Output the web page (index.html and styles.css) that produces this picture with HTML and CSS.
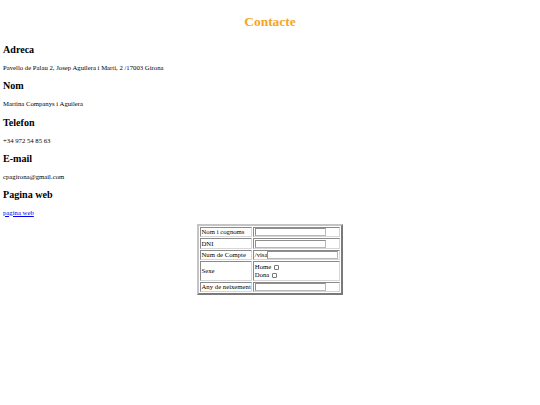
FILE: index.html
```html
<!DOCTYPE html>
<html>
<head>
<meta charset="utf-8">
<title>Contacte</title>
<link rel="stylesheet" href="styles.css">
</head>
<body class="page">
<h1 class="title">Contacte</h1>
<h2 class="label">Adreca</h2>
<p class="value">Pavello de Palau 2, Josep Aguilera i Marti, 2 /17003 Girona</p>
<h2 class="label">Nom</h2>
<p class="value">Martina Companys i Aguilera</p>
<h2 class="label">Telefon</h2>
<p class="value">+34 972 54 85 63</p>
<h2 class="label">E-mail</h2>
<p class="value">cpagirona@gmail.com</p>
<h2 class="label">Pagina web</h2>
<p class="value"><a class="link" href="#">pagina web</a></p>
<form class="form">
<table class="form-table">
<tr><td class="cell">Nom i cognoms</td><td class="cell"><input class="field" type="text"></td></tr>
<tr><td class="cell">DNI</td><td class="cell"><input class="field" type="text"></td></tr>
<tr><td class="cell">Num de Compte</td><td class="cell">/visa<input class="field" type="text"></td></tr>
<tr><td class="cell">Sexe</td><td class="cell sex">Home <input class="check" type="checkbox"><br>Dona <input class="check" type="checkbox"></td></tr>
<tr><td class="cell">Any de neixement</td><td class="cell"><input class="field" type="text"></td></tr>
</table>
</form>
</body>
</html>
```
FILE: styles.css
```css
html, body {
  margin: 0;
  padding: 0;
  background: #fff;
}
.page {
  padding: 0 3px;
  font-family: "Liberation Serif", "Times New Roman", serif;
  font-size: 6.72px;
  color: #000;
}
.title {
  text-align: center;
  color: #f5a623;
  font-size: 13.44px;
  margin: 14px 0 15px;
  line-height: 15.4px;
}
.label {
  font-size: 10.08px;
  line-height: 11.6px;
  margin: 8.4px 0;
}
.value {
  margin: 8.4px 0;
  line-height: 7.7px;
}
.link {
  color: #0000ee;
}
.form {
  margin: -1px 0 0;
  padding: 0;
}
.form-table {
  margin: 0 auto;
  border-style: solid;
  border-width: 2px;
  border-color: #c4c4c4 #7a7a7a #7a7a7a #c4c4c4;
  border-spacing: 1px;
  font-size: 6.72px;
}
.cell {
  border-style: solid;
  border-width: 1px;
  border-color: #8a8a8a #d6d6d6 #d6d6d6 #8a8a8a;
  padding: 0 0.5px;
  height: 8.5px;
  line-height: 7.7px;
}
.field {
  box-sizing: border-box;
  width: 71px;
  height: 8px;
  margin: 0;
  padding: 0;
  border: 1px solid #b8b8b8;
  border-top-color: #8e8e8e;
  border-left-color: #8e8e8e;
  font-size: 6px;
  vertical-align: middle;
  background: #fff;
}
.check {
  -webkit-appearance: none;
  appearance: none;
  box-sizing: border-box;
  width: 5px;
  height: 5px;
  margin: 0 0 0 1px;
  border: 0.7px solid #767676;
  border-radius: 1px;
  background: #fff;
  vertical-align: middle;
}
.sex {
  padding-top: 1px;
  padding-bottom: 1px;
}
```
